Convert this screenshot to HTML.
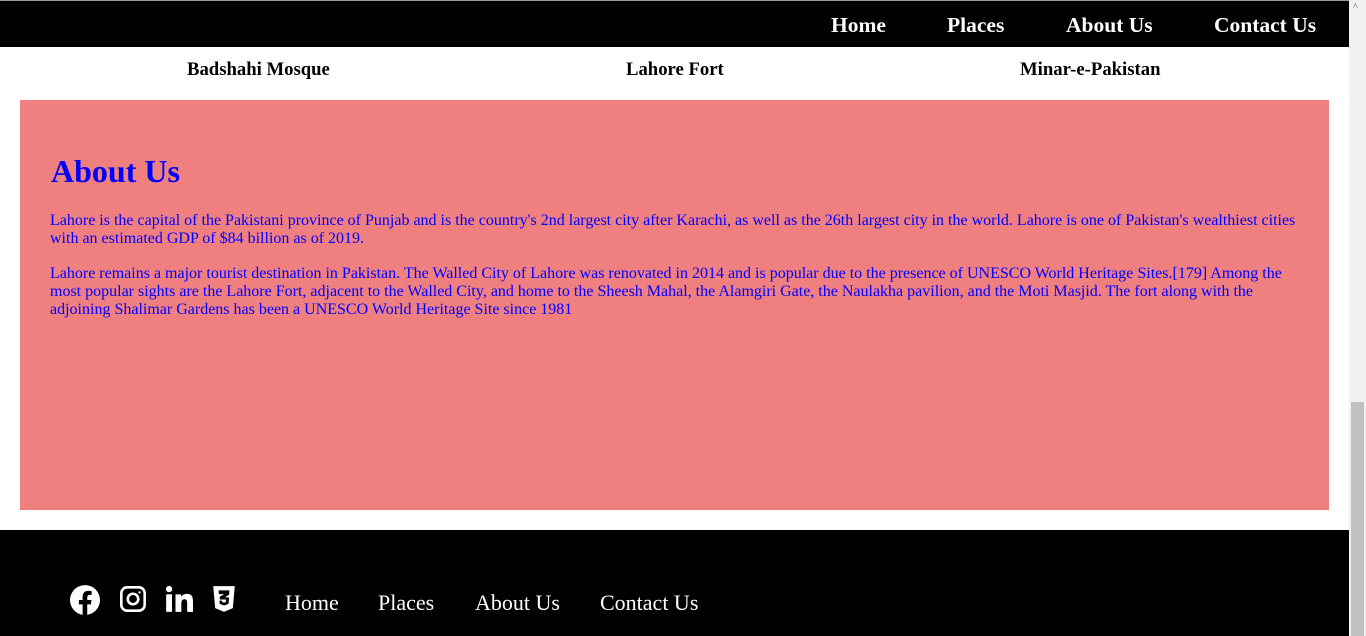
<!DOCTYPE html>
<html><head><style>
body{margin:0;width:1366px;height:636px;overflow:hidden;font-family:"Liberation Serif",serif;background:#fff;position:relative}
.sb{position:absolute;right:0;top:0;width:17px;height:636px;background:#f1f1f1}
.sb .th{position:absolute;left:2px;right:2px;top:402px;bottom:0;background:#c1c1c1}
.sb .ar{position:absolute;top:2px;left:4px;font-size:10px;color:#505050}
.top{position:absolute;left:0;top:0;width:1349px;height:47px;background:#000;border-top:1px solid #999;box-sizing:border-box}
.top a{position:absolute;top:12px;color:#fff;font-weight:bold;font-size:21.5px;text-decoration:none}
.t{position:absolute;top:59px;font-weight:bold;font-size:18.7px}
.box{position:absolute;left:20px;top:100px;width:1309px;height:410px;background:#f08080;color:#00f}
h1{font-size:32px}
.box p{margin:0;position:absolute;left:30px;width:1258px;font-size:16px;line-height:18px}
.ft{position:absolute;left:0;top:530px;width:1349px;height:106px;background:#000}
.ft a{position:absolute;top:60px;color:#fff;font-size:22px;text-decoration:none}
.ft svg{position:absolute;top:55px}
</style></head><body>
<div class="top">
<a style="left:831px">Home</a><a style="left:947px">Places</a><a style="left:1066px">About Us</a><a style="left:1214px">Contact Us</a>
</div>
<div class="t" style="left:187px">Badshahi Mosque</div>
<div class="t" style="left:626px">Lahore Fort</div>
<div class="t" style="left:1020px">Minar-e-Pakistan</div>
<div class="box">
<h1 style="position:absolute;left:31px;top:53px;margin:0">About Us</h1>
<p style="top:112px">Lahore is the capital of the Pakistani province of Punjab and is the country's 2nd largest city after Karachi, as well as the 26th largest city in the world. Lahore is one of Pakistan's wealthiest cities with an estimated GDP of $84 billion as of 2019.</p>
<p style="top:165px">Lahore remains a major tourist destination in Pakistan. The Walled City of Lahore was renovated in 2014 and is popular due to the presence of UNESCO World Heritage Sites.[179] Among the most popular sights are the Lahore Fort, adjacent to the Walled City, and home to the Sheesh Mahal, the Alamgiri Gate, the Naulakha pavilion, and the Moti Masjid. The fort along with the adjoining Shalimar Gardens has been a UNESCO World Heritage Site since 1981</p>
</div>
<div class="ft">
<svg style="left:70px" width="30" height="30" viewBox="0 0 24 24"><path fill="#fff" d="M24 12a12 12 0 1 0-13.9 11.9v-8.4H7.1V12h3V9.4c0-3 1.8-4.7 4.5-4.7 1.3 0 2.7.2 2.7.2v3h-1.5c-1.5 0-2 .9-2 1.9V12h3.4l-.5 3.5h-2.9v8.4A12 12 0 0 0 24 12z"/></svg>
<svg style="left:119px" width="28" height="28" viewBox="0 0 24 24" fill="none" stroke="#fff" stroke-width="2.2"><rect x="2" y="2" width="20" height="20" rx="5"/><circle cx="12" cy="12" r="4.5"/><circle cx="17.6" cy="6.4" r="1" fill="#fff" stroke="none"/></svg>
<svg style="left:165px" width="28" height="28" viewBox="0 0 24 24" fill="#fff"><rect x="1" y="8" width="5" height="15"/><circle cx="3.5" cy="3.5" r="2.7"/><path d="M9 8h4.8v2.1c.7-1.3 2.4-2.5 4.9-2.5 5 0 5.3 3.3 5.3 7.5V23h-5v-7c0-1.7 0-3.8-2.3-3.8S14 14 14 15.9V23H9z"/></svg>
<svg style="left:211px" width="26" height="28" viewBox="0 0 24 26"><path fill="#fff" d="M2 1h20l-1.8 20.5L12 25l-8.2-3.5z"/><path fill="#000" d="M7 5h10l-.3 4-4 2.5h4l-.5 6L12 19l-4-1.5-.2-3h2.5l.1 1.3 1.6.6 1.7-.6.2-2.3H8l.2-2.7 4-2.3H7.2z"/></svg>
<a style="left:285px">Home</a><a style="left:378px">Places</a><a style="left:475px">About Us</a><a style="left:600px">Contact Us</a>
</div>
<div class="sb"><span class="ar">^</span><div class="th"></div></div>
</body></html>
